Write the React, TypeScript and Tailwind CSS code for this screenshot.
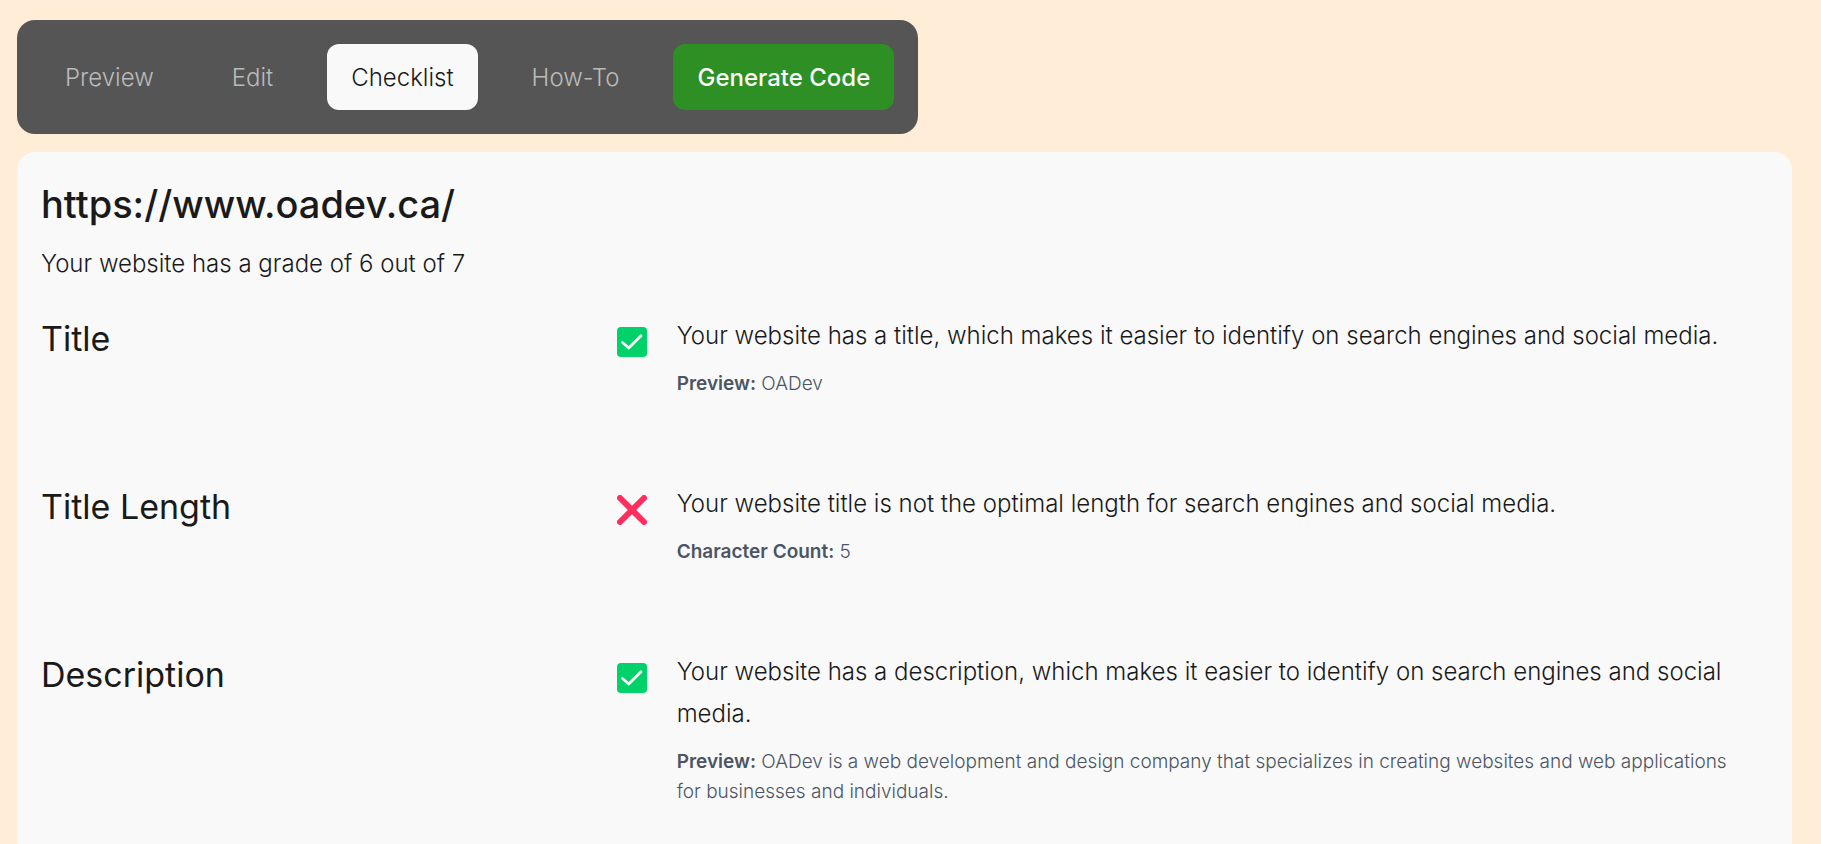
import type { ReactNode } from "react";

const tabs = ["Preview", "Edit", "Checklist", "How-To"];

type Check = {
  name: string;
  passed: boolean;
  message: string;
  label: string;
  detail: string;
};

const checks: Check[] = [
  {
    name: "Title",
    passed: true,
    message:
      "Your website has a title, which makes it easier to identify on search engines and social media.",
    label: "Preview:",
    detail: "OADev",
  },
  {
    name: "Title Length",
    passed: false,
    message:
      "Your website title is not the optimal length for search engines and social media.",
    label: "Character Count:",
    detail: "5",
  },
  {
    name: "Description",
    passed: true,
    message:
      "Your website has a description, which makes it easier to identify on search engines and social media.",
    label: "Preview:",
    detail:
      "OADev is a web development and design company that specializes in creating websites and web applications for businesses and individuals.",
  },
];

function StatusIcon({ passed }: { passed: boolean }) {
  let shape: ReactNode;
  if (passed) {
    shape = (
      <>
        <rect width="30" height="30" rx="4" fill="#00d169" />
        <path
          d="M5.5 15.5 11.8 21 24 8.8"
          fill="none"
          stroke="#f9f9f9"
          strokeWidth="2.8"
          strokeLinecap="round"
          strokeLinejoin="round"
        />
      </>
    );
  } else {
    shape = (
      <path
        d="M3 3 27 27M27 3 3 27"
        fill="none"
        stroke="#ff2e5f"
        strokeWidth="6"
        strokeLinecap="round"
      />
    );
  }
  return (
    <svg
      viewBox="0 0 30 30"
      role="img"
      aria-label={passed ? "Passed" : "Failed"}
      className="mt-3 size-[30px] shrink-0"
    >
      {shape}
    </svg>
  );
}

export default function App() {
  return (
    <div className="flex min-h-screen flex-col items-start gap-[18px] bg-[#ffedd8] pt-5 pr-[29px] pl-[17px] font-['Inter','Liberation_Sans',sans-serif] text-2xl leading-[42px] font-light text-[#1a1a1a]">
      <nav className="flex gap-[30px] rounded-[18px] bg-[#555555] p-6">
        {tabs.map((tab) => (
          <button
            key={tab}
            type="button"
            className={
              tab === "Checklist"
                ? "rounded-xl bg-[#f9f9f9] px-6 pt-[13px] pb-[11px]"
                : "rounded-xl px-6 pt-[13px] pb-[11px] text-[#bbbbbb]"
            }
          >
            {tab}
          </button>
        ))}
        <button
          type="button"
          className="rounded-xl bg-[#2d8f24] px-6 pt-[13px] pb-[11px] font-medium text-[#f9f9f9]"
        >
          Generate Code
        </button>
      </nav>

      <main className="w-full grow rounded-t-[18px] bg-[#f9f9f9] p-6">
        <h1 className="text-[38px] leading-[56px] font-medium">
          https://www.oadev.ca/
        </h1>
        <p className="mt-[11px] mb-[30px]">
          Your website has a grade of 6 out of 7
        </p>

        {checks.map((check) => (
          <section key={check.name} className="flex min-h-[168px]">
            <h2 className="w-1/3 shrink-0 text-[34px] leading-[48px] font-normal">
              {check.name}
            </h2>
            <div className="flex grow items-start gap-[30px]">
              <StatusIcon passed={check.passed} />
              <div>
                <p>{check.message}</p>
                <p className="mt-3 pr-4 text-[19px] leading-[30px] text-[#4b5563]">
                  <strong className="font-semibold">{check.label}</strong>{" "}
                  {check.detail}
                </p>
              </div>
            </div>
          </section>
        ))}
      </main>
    </div>
  );
}
